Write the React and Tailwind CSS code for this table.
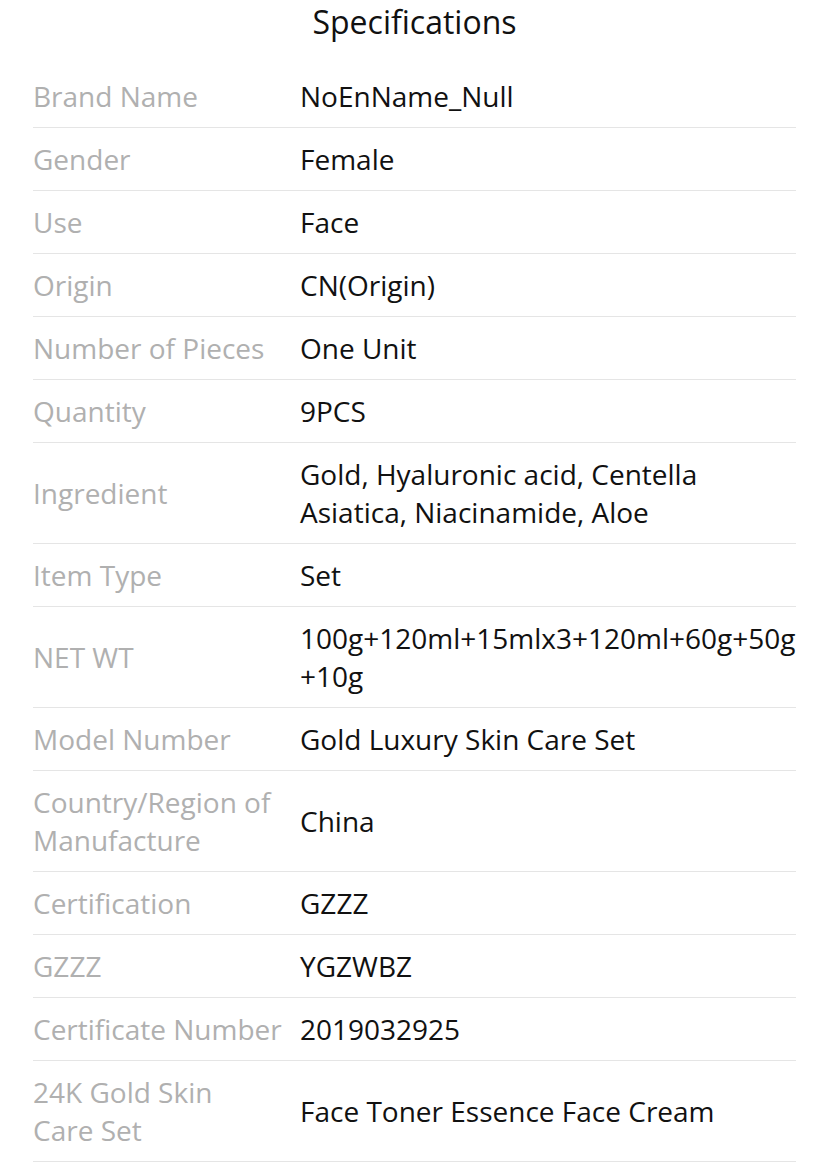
const specs = [
  { label: "Brand Name", value: "NoEnName_Null" },
  { label: "Gender", value: "Female" },
  { label: "Use", value: "Face" },
  { label: "Origin", value: "CN(Origin)" },
  { label: "Number of Pieces", value: "One Unit" },
  { label: "Quantity", value: "9PCS" },
  { label: "Ingredient", value: "Gold, Hyaluronic acid, Centella Asiatica, Niacinamide, Aloe" },
  { label: "Item Type", value: "Set" },
  {
    label: "NET WT",
    value: (
      <>
        100g+120ml+15mlx3+120ml+60g+50g
        <br />
        +10g
      </>
    ),
  },
  { label: "Model Number", value: "Gold Luxury Skin Care Set" },
  { label: "Country/Region of Manufacture", value: "China" },
  { label: "Certification", value: "GZZZ" },
  { label: "GZZZ", value: "YGZWBZ" },
  { label: "Certificate Number", value: "2019032925" },
  {
    label: (
      <>
        24K Gold Skin
        <br />
        Care Set
      </>
    ),
    value: "Face Toner Essence Face Cream",
  },
];

export default function App() {
  return (
    <div
      className="min-h-[1167px] bg-white pl-[33px] pr-[29px]"
      style={{ fontFamily: '"Open Sans", "Liberation Sans", sans-serif' }}
    >
      <h2 className="pb-[21px] text-center text-[32px] leading-[44px] text-[#111]">
        Specifications
      </h2>

      <div className="flex flex-col">
        {specs.map((spec, index) => (
          <div
            key={index}
            className="flex items-center border-b border-[#e5e5e5] py-3 text-[28px] leading-[38px]"
          >
            <div className="w-[267px] shrink-0 pr-3 text-[#b0b0b0]">{spec.label}</div>
            <div className="min-w-0 flex-1 break-words text-[#111]">{spec.value}</div>
          </div>
        ))}
      </div>
    </div>
  );
}
